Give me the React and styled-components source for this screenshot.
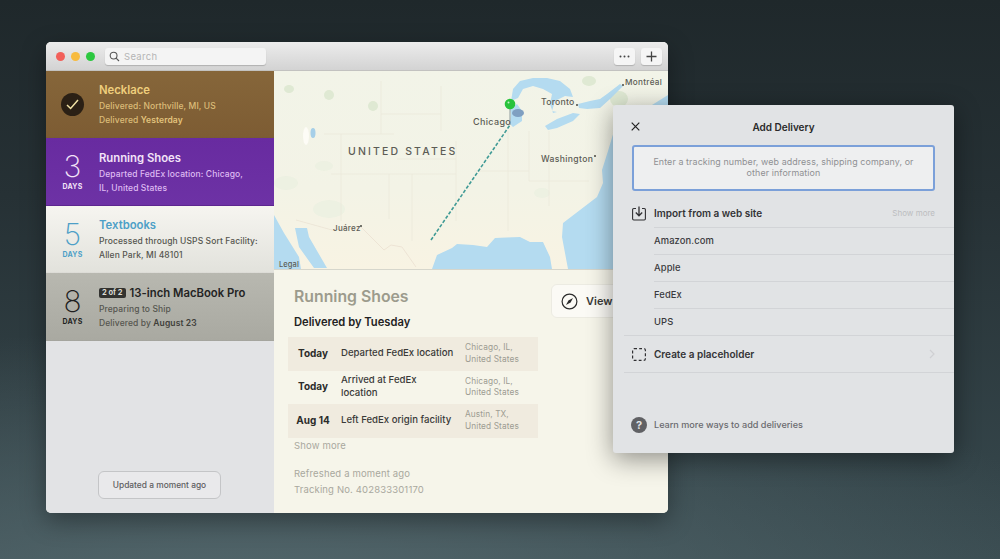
import React from 'react';
import styled, { createGlobalStyle } from 'styled-components';

const GlobalStyle = createGlobalStyle`
  html, body {
    margin: 0;
    padding: 0;
    background: #2c383c;
  }
  * {
    box-sizing: border-box;
  }
`;

const Stage = styled.div`
  position: relative;
  width: 1000px;
  height: 559px;
  overflow: hidden;
  padding: 42px 0 0 46px;
  font-family: Inter, "Liberation Sans", sans-serif;
  background: radial-gradient(ellipse 900px 300px at 25% 112%, #566a6f 0%, rgba(86, 106, 111, 0) 100%),
    linear-gradient(180deg, #1f282b 0%, #263135 35%, #384a4f 100%);
`;

const Window = styled.div`
  width: 622px;
  height: 471px;
  border-radius: 5px;
  overflow: hidden;
  background: #f6f5ea;
  display: flex;
  flex-direction: column;
  box-shadow: 0 8px 24px rgba(0, 0, 0, 0.35);
`;

const TitleBar = styled.div`
  height: 29px;
  flex: none;
  display: flex;
  align-items: center;
  padding: 0 6px 0 10px;
  background: linear-gradient(180deg, #ececec 0%, #d3d3d3 100%);
  border-bottom: 1px solid #c2c2c0;
`;

const Light = styled.span`
  width: 9px;
  height: 9px;
  border-radius: 50%;
  margin-right: 6px;
  background: ${p => p.color};
`;

const Search = styled.div`
  width: 161px;
  height: 17px;
  margin-left: 4px;
  display: flex;
  align-items: center;
  gap: 4px;
  padding-left: 4px;
  border-radius: 3px;
  background: #f4f4f4;
  box-shadow: 0 1px 1px rgba(0, 0, 0, 0.18);
  font-size: 9.5px;
  letter-spacing: 0.3px;
  color: #b4b4b4;
`;

const ToolButton = styled.button`
  width: 21px;
  height: 17px;
  padding: 0;
  margin-left: ${p => p.$gap || 0}px;
  display: flex;
  align-items: center;
  justify-content: center;
  border: none;
  border-radius: 3px;
  background: #f5f5f5;
  box-shadow: 0 1px 1px rgba(0, 0, 0, 0.18);
  color: #444;
`;

const Body = styled.div`
  flex: 1;
  min-height: 0;
  display: flex;
`;

const Sidebar = styled.aside`
  width: 228px;
  flex: none;
  display: flex;
  flex-direction: column;
  background: #e2e3e5;
`;

const rowThemes = {
  brown: { bg: 'linear-gradient(180deg, #86663a, #7d5c33)', title: '#efcf7d', sub: '#dcbd79', strong: '#e3c47e', num: '#fff' },
  purple: { bg: 'linear-gradient(180deg, #682ba0, #6d32a5)', title: '#f3e3f8', sub: '#dfbbf2', strong: '#dfbbf2', num: '#f3e3f8' },
  white: { bg: 'linear-gradient(180deg, #f6f5f0, #e2e2dc)', title: '#4d9fc7', sub: '#55554f', strong: '#55554f', num: '#4d9fc7' },
  gray: { bg: 'linear-gradient(180deg, #b8b8b0, #a9a9a1)', title: '#232323', sub: '#55554f', strong: '#3f3f3b', num: '#1f1f1f' },
};

const Row = styled.div`
  height: ${p => p.$height}px;
  flex: none;
  display: flex;
  align-items: center;
  background: ${p => rowThemes[p.$tone].bg};
  border-bottom: 1px solid rgba(0, 0, 0, 0.1);
`;

const RowBadge = styled.div`
  width: 53px;
  flex: none;
  display: flex;
  flex-direction: column;
  align-items: center;
  color: ${p => rowThemes[p.$tone].num};
`;

const DayCount = styled.div`
  font-size: 30px;
  font-weight: 200;
  line-height: 29px;
`;

const Days = styled.div`
  font-size: 7px;
  font-weight: 700;
  line-height: 9px;
  letter-spacing: 0.2px;
  margin-top: 1px;
`;

const CheckCircle = styled.div`
  width: 23px;
  height: 23px;
  border-radius: 50%;
  background: #2b2015;
  display: flex;
  align-items: center;
  justify-content: center;
`;

const RowText = styled.div`
  flex: 1;
  min-width: 0;
`;

const RowTitle = styled.div`
  display: flex;
  align-items: center;
  gap: 4px;
  font-size: 11.3px;
  font-weight: 600;
  line-height: 15px;
  padding-top: 2px;
  margin-bottom: 1px;
  color: ${p => rowThemes[p.$tone].title};
`;

const RowLine = styled.div`
  font-size: 8.5px;
  font-weight: 500;
  line-height: 14px;
  letter-spacing: 0.1px;
  white-space: nowrap;
  color: ${p => rowThemes[p.$tone].sub};

  & b {
    font-weight: 600;
    color: ${p => rowThemes[p.$tone].strong};
  }
`;

const CountTag = styled.span`
  padding: 0 3px;
  border-radius: 2px;
  background: #333330;
  color: #dcdcd6;
  font-size: 7.5px;
  font-weight: 700;
  line-height: 10px;
`;

const SideFoot = styled.div`
  flex: 1;
  display: flex;
  align-items: flex-end;
  justify-content: center;
  padding: 0 1px 14px 0;
`;

const UpdatedPill = styled.div`
  width: 123px;
  height: 28px;
  display: flex;
  align-items: center;
  justify-content: center;
  border: 1px solid #c4c5c7;
  border-radius: 6px;
  background: #e9e9eb;
  font-size: 8.4px;
  font-weight: 500;
  color: #5d5d60;
`;

const Main = styled.main`
  flex: 1;
  min-width: 0;
  display: flex;
  flex-direction: column;
`;

const MapBox = styled.div`
  height: 199px;
  flex: none;
  border-bottom: 1px solid #d6d6cc;
  background: #f4f1e3;

  & svg {
    display: block;
  }
`;

const Detail = styled.div`
  flex: 1;
  position: relative;
  padding: 16px 14px 0;
  background: #f6f5ea;
`;

const DetailTitle = styled.h2`
  margin: 0 0 0 6px;
  font-size: 15.8px;
  font-weight: 600;
  line-height: 22px;
  color: #9c9b8d;
`;

const DeliveryNote = styled.div`
  margin: 6px 0 7px 6px;
  font-size: 11.2px;
  font-weight: 600;
  line-height: 16px;
  color: #222;
`;

const ViewButton = styled.div`
  position: absolute;
  left: 277px;
  top: 14px;
  width: 120px;
  height: 34px;
  display: flex;
  align-items: center;
  gap: 8px;
  padding-left: 9px;
  border: 1px solid #ecebe2;
  border-radius: 6px;
  background: #fbfaf5;
  font-size: 11px;
  font-weight: 600;
  color: #3a3a38;
`;

const Events = styled.div`
  width: 250px;
`;

const EventRow = styled.div`
  height: 33.5px;
  display: grid;
  grid-template-columns: 50px 127px 73px;
  align-items: center;
  background: ${p => (p.$shaded ? '#f0ebdf' : 'transparent')};
`;

const EventDate = styled.div`
  margin-bottom: 2px;
  text-align: center;
  font-size: 10px;
  font-weight: 700;
  color: #2c2c2a;
`;

const EventText = styled.div`
  margin-bottom: 2px;
  padding-left: 3px;
  font-size: 9.6px;
  font-weight: 500;
  line-height: 13px;
  color: #3a3a38;
`;

const EventPlace = styled.div`
  font-size: 8.3px;
  line-height: 11.5px;
  letter-spacing: 0.1px;
  color: #9d9c92;
`;

const MutedLine = styled.div`
  margin: ${p => p.$top || 0}px 0 0 6px;
  font-size: 9.5px;
  line-height: 16px;
  letter-spacing: 0.15px;
  color: #a9a89e;
`;

const Modal = styled.section`
  position: absolute;
  left: 613px;
  top: 105px;
  width: 341px;
  height: 348px;
  display: flex;
  flex-direction: column;
  border-radius: 3px;
  background: #e1e3e5;
  box-shadow: 0 6px 26px rgba(0, 0, 0, 0.42);
`;

const ModalHead = styled.header`
  height: 40px;
  flex: none;
  position: relative;
  display: flex;
  align-items: center;
  justify-content: center;
  padding-top: 4px;
  font-size: 10px;
  font-weight: 600;
  color: #2a2a2a;
`;

const CloseIcon = styled.svg`
  position: absolute;
  left: 18px;
  top: 17px;
`;

const TrackingField = styled.div`
  height: 46px;
  margin: 0 19px;
  flex: none;
  display: flex;
  align-items: center;
  justify-content: center;
  padding: 0 15px 2px;
  border: 2px solid #7ba0d9;
  border-radius: 3px;
  background: #eeeff0;
  text-align: center;
  font-size: 8.9px;
  line-height: 11.5px;
  letter-spacing: 0.1px;
  color: #8f8f93;
`;

const SectionRow = styled.div`
  height: ${p => p.$height}px;
  flex: none;
  display: flex;
  align-items: center;
  gap: 8px;
  font-size: 10px;
  font-weight: 600;
  color: #333336;
`;

const ImportRow = styled(SectionRow)`
  padding: 8px 19px 0;
`;

const PlaceholderRow = styled(SectionRow)`
  margin-left: 11px;
  padding: 0 19px 0 8px;
  border-top: 1px solid #d2d4d7;
  border-bottom: 1px solid #d2d4d7;
`;

const RowGrow = styled.span`
  flex: 1;
`;

const ShowMore = styled.span`
  font-size: 8px;
  font-weight: 400;
  color: #bcbdc0;
`;

const SiteList = styled.div`
  margin-left: 41px;
  flex: none;
`;

const SiteRow = styled.div`
  height: 27px;
  display: flex;
  align-items: center;
  padding-bottom: 2px;
  border-top: 1px solid #d2d4d7;
  font-size: 9.4px;
  font-weight: 500;
  letter-spacing: 0.1px;
  color: #3a3a3d;
`;

const ModalFoot = styled.footer`
  margin-top: auto;
  height: 36px;
  flex: none;
  display: flex;
  align-items: flex-start;
  gap: 7px;
  padding: 0 19px 0 18px;
  font-size: 9.1px;
  font-weight: 500;
  color: #6a6a6e;
  line-height: 16px;
`;

const HelpDot = styled.span`
  width: 16px;
  height: 16px;
  flex: none;
  border-radius: 50%;
  background: #606164;
  color: #e1e3e6;
  display: flex;
  align-items: center;
  justify-content: center;
  font-size: 11px;
  font-weight: 700;
`;

const mapLabel = { fontFamily: 'Inter, "Liberation Sans", sans-serif', fontWeight: 500, fill: '#5c5c55' };

const UsMap = () => (
  <svg width="394" height="198" viewBox="0 0 394 198">
    <defs>
      <linearGradient id="land" x1="0" y1="0" x2="0" y2="1">
        <stop offset="0" stopColor="#f2f4e8" />
        <stop offset="0.6" stopColor="#f3f3e6" />
        <stop offset="1" stopColor="#f8f3e3" />
      </linearGradient>
      <filter id="soft">
        <feGaussianBlur stdDeviation="0.5" />
      </filter>
    </defs>
    <rect width="394" height="198" fill="url(#land)" />
    <g filter="url(#soft)">
      {/* green patches */}
      <g fill="#dfe9d3">
        <ellipse cx="15" cy="18" rx="5" ry="4" />
        <ellipse cx="55" cy="24" rx="5" ry="5" />
        <ellipse cx="99" cy="35" rx="5" ry="5" />
        <ellipse cx="315" cy="10" rx="7" ry="5" />
        <ellipse cx="345" cy="28" rx="9" ry="8" />
      </g>
      <g fill="#edf1e2">
        <ellipse cx="12" cy="112" rx="12" ry="7" />
        <ellipse cx="50" cy="95" rx="9" ry="5" />
        <ellipse cx="55" cy="138" rx="16" ry="9" />
        <ellipse cx="268" cy="122" rx="8" ry="5" />
      </g>
      {/* state lines */}
      <g stroke="#ebe9da" strokeWidth="0.8" fill="none">
        <path d="M67 63V150M107 10V63M167 15V60M115 103V148M138 103V170M182 70V150M50 63H120M107 43H167M57 103H182M123 88H182M234 60V160M255 60V110H315M200 100H255M275 60V135" />
        <path d="M22 149L58 159L87 156" stroke="#ebe3d4" />
        <path d="M87 156L110 179L117 174L128 176L142 196" stroke="#ebe0d1" />
      </g>
      {/* water */}
      <g fill="#b4dbf0">
        <path d="M158 198L163 184L178 177L183 173L199 174L213 176L221 167L246 166L256 171L269 171L276 186L278 198Z" />
        <path d="M294 198L288 166L289 152L306 139L323 126L329 112L328 99L334 80L340 60L394 40V198Z" />
        <path d="M0 144L10 162L25 186L27 198H0Z" />
        <path d="M21 157L33 157L35 166L53 197H40L25 176Z" />
        <path d="M237 43L236 38L243 33L248 40L248 50L239 56L236 53Z" />
        <path d="M237 30L239 18L246 10L259 7L273 7L286 10L296 18L299 26L291 25L281 30L278 40L283 41L279 42L276 33L278 23L269 18L259 15L249 18L244 27Z" />
        <path d="M271 55L283 48L299 42L306 43L299 50L283 57L274 59Z" />
        <path d="M304 33L316 30L326 28L333 23L346 13L349 15L336 28L326 37L313 38L305 37Z" />
        <path d="M378 34L394 24V34Z" />
      </g>
      <ellipse cx="32" cy="65" rx="3" ry="9" fill="#fdfcf6" />
      <ellipse cx="39" cy="62" rx="2.5" ry="5" fill="#a6cfe8" />
      <ellipse cx="244" cy="42" rx="6" ry="4" fill="#7f9fc1" />
    </g>
    <path d="M157 169L236 54" stroke="#3f9a95" strokeWidth="1.6" strokeDasharray="3.4 1.8" fill="none" />
    <path d="M236 36V54" stroke="#8e9a9c" strokeWidth="1" />
    <circle cx="236" cy="33" r="5.3" fill="#29c33c" />
    <circle cx="234.5" cy="31.5" r="1" fill="#c5f2c8" />
    <g fill="#56564f">
      <circle cx="303" cy="34" r="1.1" />
      <circle cx="349" cy="14" r="1.1" />
      <circle cx="321" cy="85" r="1.1" />
      <circle cx="87" cy="155" r="1.1" />
    </g>
    <text x="74" y="84" fontSize="10.5" letterSpacing="2.15" {...mapLabel}>UNITED STATES</text>
    <text x="199" y="54" fontSize="9" letterSpacing="0.35" {...mapLabel}>Chicago</text>
    <text x="267" y="34" fontSize="8.7" letterSpacing="0.2" {...mapLabel}>Toronto</text>
    <text x="351" y="14" fontSize="8.2" letterSpacing="0.3" {...mapLabel}>Montréal</text>
    <text x="267" y="91" fontSize="8.6" letterSpacing="0.35" {...mapLabel}>Washington</text>
    <text x="59" y="160" fontSize="8" letterSpacing="0.3" {...mapLabel}>Juárez</text>
    <text x="5" y="196" fontSize="7.5" letterSpacing="0.1" {...mapLabel}>Legal</text>
  </svg>
);

const SearchIcon = () => (
  <svg width="11" height="11" viewBox="0 0 11 11" fill="none" stroke="#555" strokeWidth="1.1">
    <circle cx="4.6" cy="4.6" r="3.4" />
    <path d="M7.1 7.1L10 10" />
  </svg>
);

const CompassIcon = () => (
  <svg width="17" height="17" viewBox="0 0 17 17" fill="none">
    <circle cx="8.5" cy="8.5" r="7.4" stroke="#2b2b2b" strokeWidth="1.2" />
    <path d="M12 5L9.6 9.6L5 12L7.4 7.4Z" fill="#2b2b2b" />
  </svg>
);

const ImportIcon = () => (
  <svg width="14" height="15" viewBox="0 0 14 15" fill="none" stroke="#303033" strokeWidth="1.1">
    <path d="M4 2.5H1.8C1 2.5.6 3 .6 3.7V12.8C.6 13.6 1 14 1.8 14H12.2C13 14 13.4 13.6 13.4 12.8V3.7C13.4 3 13 2.5 12.2 2.5H10" />
    <path d="M7 .5V9.5M3.8 6.5L7 9.8L10.2 6.5" strokeWidth="1.3" />
  </svg>
);

const PlaceholderIcon = () => (
  <svg width="14" height="13" viewBox="0 0 14 13" fill="none" stroke="#303033" strokeWidth="1.2">
    <rect x="0.6" y="0.6" width="12.8" height="11.8" rx="1.6" strokeDasharray="2.8 2.2" />
  </svg>
);

const App = () => (
  <Stage>
    <GlobalStyle />
    <Window>
      <TitleBar>
        <Light color="#f2605a" />
        <Light color="#f7bb3f" />
        <Light color="#2cc840" />
        <Search>
          <SearchIcon />
          Search
        </Search>
        <RowGrow />
        <ToolButton>
          <svg width="11" height="3" viewBox="0 0 11 3" fill="#444">
            <circle cx="1.5" cy="1.5" r="1" />
            <circle cx="5.5" cy="1.5" r="1" />
            <circle cx="9.5" cy="1.5" r="1" />
          </svg>
        </ToolButton>
        <ToolButton $gap={6}>
          <svg width="11" height="11" viewBox="0 0 11 11" stroke="#444" strokeWidth="1.3">
            <path d="M5.5 0.5V10.5M0.5 5.5H10.5" />
          </svg>
        </ToolButton>
      </TitleBar>
      <Body>
        <Sidebar>
          <Row $tone="brown" $height={67}>
            <RowBadge $tone="brown">
              <CheckCircle>
                <svg width="13" height="11" viewBox="0 0 13 11" fill="none" stroke="#f2e3a6" strokeWidth="1.5">
                  <path d="M1 6L4.6 9.5L12 1" />
                </svg>
              </CheckCircle>
            </RowBadge>
            <RowText>
              <RowTitle $tone="brown">Necklace</RowTitle>
              <RowLine $tone="brown">Delivered: Northville, MI, US</RowLine>
              <RowLine $tone="brown">Delivered <b>Yesterday</b></RowLine>
            </RowText>
          </Row>
          <Row $tone="purple" $height={68}>
            <RowBadge $tone="purple">
              <DayCount>3</DayCount>
              <Days>DAYS</Days>
            </RowBadge>
            <RowText>
              <RowTitle $tone="purple">Running Shoes</RowTitle>
              <RowLine $tone="purple">Departed FedEx location: Chicago,</RowLine>
              <RowLine $tone="purple">IL, United States</RowLine>
            </RowText>
          </Row>
          <Row $tone="white" $height={67}>
            <RowBadge $tone="white">
              <DayCount>5</DayCount>
              <Days>DAYS</Days>
            </RowBadge>
            <RowText>
              <RowTitle $tone="white">Textbooks</RowTitle>
              <RowLine $tone="white">Processed through USPS Sort Facility:</RowLine>
              <RowLine $tone="white">Allen Park, MI 48101</RowLine>
            </RowText>
          </Row>
          <Row $tone="gray" $height={68}>
            <RowBadge $tone="gray">
              <DayCount>8</DayCount>
              <Days>DAYS</Days>
            </RowBadge>
            <RowText>
              <RowTitle $tone="gray">
                <CountTag>2 of 2</CountTag>
                13-inch MacBook Pro
              </RowTitle>
              <RowLine $tone="gray">Preparing to Ship</RowLine>
              <RowLine $tone="gray">Delivered by <b>August 23</b></RowLine>
            </RowText>
          </Row>
          <SideFoot>
            <UpdatedPill>Updated a moment ago</UpdatedPill>
          </SideFoot>
        </Sidebar>
        <Main>
          <MapBox>
            <UsMap />
          </MapBox>
          <Detail>
            <DetailTitle>Running Shoes</DetailTitle>
            <DeliveryNote>Delivered by Tuesday</DeliveryNote>
            <ViewButton>
              <CompassIcon />
              View Order
            </ViewButton>
            <Events>
              <EventRow $shaded>
                <EventDate>Today</EventDate>
                <EventText>Departed FedEx location</EventText>
                <EventPlace>Chicago, IL,<br />United States</EventPlace>
              </EventRow>
              <EventRow>
                <EventDate>Today</EventDate>
                <EventText>Arrived at FedEx<br />location</EventText>
                <EventPlace>Chicago, IL,<br />United States</EventPlace>
              </EventRow>
              <EventRow $shaded>
                <EventDate>Aug 14</EventDate>
                <EventText>Left FedEx origin facility</EventText>
                <EventPlace>Austin, TX,<br />United States</EventPlace>
              </EventRow>
            </Events>
            <MutedLine>Show more</MutedLine>
            <MutedLine $top={12}>Refreshed a moment ago</MutedLine>
            <MutedLine>Tracking No. 402833301170</MutedLine>
          </Detail>
        </Main>
      </Body>
    </Window>
    <Modal>
      <ModalHead>
        <CloseIcon width="9" height="9" viewBox="0 0 9 9" stroke="#222" strokeWidth="1.2">
          <path d="M.7.7L8.3 8.3M8.3.7L.7 8.3" />
        </CloseIcon>
        Add Delivery
      </ModalHead>
      <TrackingField>Enter a tracking number, web address, shipping company, or other information</TrackingField>
      <ImportRow $height={36}>
        <ImportIcon />
        <RowGrow>Import from a web site</RowGrow>
        <ShowMore>Show more</ShowMore>
      </ImportRow>
      <SiteList>
        <SiteRow>Amazon.com</SiteRow>
        <SiteRow>Apple</SiteRow>
        <SiteRow>FedEx</SiteRow>
        <SiteRow>UPS</SiteRow>
      </SiteList>
      <PlaceholderRow $height={38}>
        <PlaceholderIcon />
        <RowGrow>Create a placeholder</RowGrow>
        <svg width="6" height="10" viewBox="0 0 6 10" fill="none" stroke="#cfd0d3" strokeWidth="1.2">
          <path d="M1 1L5 5L1 9" />
        </svg>
      </PlaceholderRow>
      <ModalFoot>
        <HelpDot>?</HelpDot>
        Learn more ways to add deliveries
      </ModalFoot>
    </Modal>
  </Stage>
);

export default App;
